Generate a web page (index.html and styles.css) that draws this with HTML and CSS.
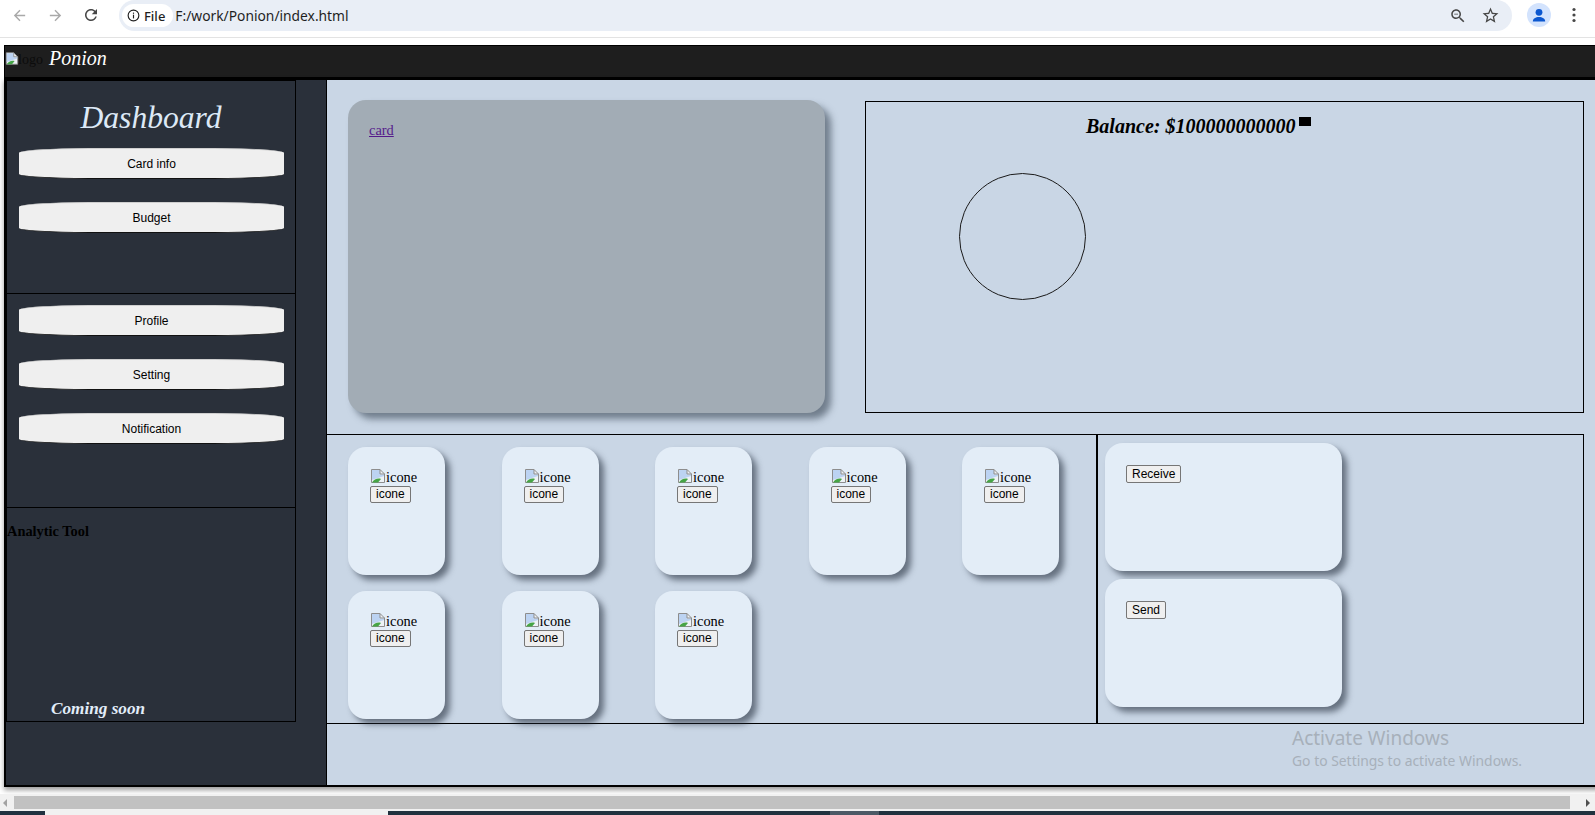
FILE: index.html
```html
<!DOCTYPE html>
<html>
<head>
<meta charset="utf-8">
<title>Ponion</title>
<link rel="stylesheet" href="styles.css">
</head>
<body>
<div class="chrome">
  <div class="nav-icon dim"><svg viewBox="0 0 24 24" width="17" height="17"><path d="M20 11H7.83l5.59-5.59L12 4l-8 8 8 8 1.41-1.41L7.83 13H20v-2z"/></svg></div>
  <div class="nav-icon dim"><svg viewBox="0 0 24 24" width="17" height="17"><path d="M12 4l-1.41 1.41L16.17 11H4v2h12.17l-5.58 5.59L12 20l8-8z"/></svg></div>
  <div class="nav-icon"><svg viewBox="0 0 24 24" width="18" height="18"><path d="M17.65 6.35C16.2 4.9 14.21 4 12 4c-4.42 0-7.99 3.58-7.99 8s3.57 8 7.99 8c3.730 0 6.84-2.55 7.73-6h-2.08c-.82 2.33-3.04 4-5.650 4-3.31 0-6-2.690-6-6s2.69-6 6-6c1.66 0 3.14.69 4.22 1.78L13 11h7V4l-2.35 2.35z"/></svg></div>
  <div class="omnibox">
    <div class="chip">
      <svg viewBox="0 0 16 16" width="13" height="13"><circle cx="8" cy="8" r="6.6" fill="none" stroke="#1f1f1f" stroke-width="1.4"/><rect x="7.3" y="7" width="1.4" height="4.6" fill="#1f1f1f"/><rect x="7.3" y="4.4" width="1.4" height="1.5" fill="#1f1f1f"/></svg>
      <span class="chip-text">File</span>
    </div>
    <span class="url">F:/work/Ponion/index.html</span>
    <div class="omni-icons">
      <div class="omni-icon"><svg viewBox="0 0 24 24" width="18" height="18"><path d="M15.5 14h-.79l-.28-.27C15.41 12.59 16 11.11 16 9.5 16 5.91 13.09 3 9.5 3S3 5.91 3 9.5 5.91 16 9.5 16c1.61 0 3.09-.59 4.23-1.57l.27.28v.79l5 4.99L20.49 19l-4.99-5zm-6 0C7.01 14 5 11.99 5 9.5S7.01 5 9.5 5 14 7.01 14 9.5 11.99 14 9.5 14zM7 9h5v1H7z"/></svg></div>
      <div class="omni-icon"><svg viewBox="0 0 24 24" width="19" height="19"><path d="M22 9.24l-7.19-.62L12 2 9.19 8.63 2 9.24l5.46 4.73L5.82 21 12 17.27 18.18 21l-1.63-7.03L22 9.24zM12 15.4l-3.76 2.27 1-4.28-3.32-2.88 4.38-.38L12 6.1l1.71 4.04 4.38.38-3.32 2.88 1 4.28L12 15.4z"/></svg></div>
    </div>
  </div>
  <div class="avatar-slot">
    <div class="avatar"><svg viewBox="0 0 24 24" width="24" height="24"><circle cx="12" cy="9.3" r="3.4" fill="#0b57d0"/><path d="M5.8 18.6c0-3 2.8-4.6 6.2-4.6s6.2 1.6 6.2 4.6z" fill="#0b57d0"/></svg></div>
  </div>
  <div class="kebab"><svg viewBox="0 0 4 16" width="4" height="16"><circle cx="2" cy="2.5" r="1.6"/><circle cx="2" cy="8" r="1.6"/><circle cx="2" cy="13.5" r="1.6"/></svg></div>
</div>

<div class="viewport">
  <div class="page">
    <header class="topbar">
      <span class="logo">
        <svg class="broken" viewBox="0 0 16 16" width="14" height="15"><path d="M1.5 1.5h8.5l4.5 4.5v8.5h-13z" fill="#eef2f6" stroke="#8d8d8d"/><path d="M2 2h8v4.5h4V8L2 12z" fill="#bcd3f2"/><path d="M2 14.5c2-3.2 5.5-4.6 9-3.6l-3 3.6z" fill="#46a546"/><path d="M10 1.5v4.5h4.5" fill="none" stroke="#8d8d8d"/></svg><span class="logo-alt">logo</span>
      </span>
      <span class="brand">Ponion</span>
    </header>

    <div class="main">
      <aside class="sidebar">
        <section class="panel panel-top">
          <h1 class="dash-title">Dashboard</h1>
          <button class="side-btn">Card info</button>
          <button class="side-btn">Budget</button>
        </section>
        <section class="panel panel-mid">
          <button class="side-btn">Profile</button>
          <button class="side-btn">Setting</button>
          <button class="side-btn">Notification</button>
        </section>
        <section class="panel panel-tool">
          <h4 class="tool-title">Analytic Tool</h4>
          <h3 class="soon">Coming soon</h3>
        </section>
      </aside>

      <div class="content">
        <div class="top-row">
          <div class="bank-card"><a class="card-link" href="#">card</a></div>
          <div class="balance-box">
            <div class="balance-head">
              <h2 class="balance">Balance: $100000000000</h2>
              <span class="sq"></span>
            </div>
            <div class="ring"></div>
          </div>
        </div>

        <div class="bottom-row">
          <div class="icons-box">
            <div class="icon-card"><div class="alt-line"><svg class="broken" viewBox="0 0 16 16" width="16" height="16"><path d="M1.5 1.5h8.5l4.5 4.5v8.5h-13z" fill="#eef2f6" stroke="#8d8d8d"/><path d="M2 2h8v4.5h4V8L2 12z" fill="#bcd3f2"/><path d="M2 14.5c2-3.2 5.5-4.6 9-3.6l-3 3.6z" fill="#46a546"/><path d="M10 1.5v4.5h4.5" fill="none" stroke="#8d8d8d"/></svg><span>icone</span></div><button class="ui-btn">icone</button></div>
            <div class="icon-card"><div class="alt-line"><svg class="broken" viewBox="0 0 16 16" width="16" height="16"><path d="M1.5 1.5h8.5l4.5 4.5v8.5h-13z" fill="#eef2f6" stroke="#8d8d8d"/><path d="M2 2h8v4.5h4V8L2 12z" fill="#bcd3f2"/><path d="M2 14.5c2-3.2 5.5-4.6 9-3.6l-3 3.6z" fill="#46a546"/><path d="M10 1.5v4.5h4.5" fill="none" stroke="#8d8d8d"/></svg><span>icone</span></div><button class="ui-btn">icone</button></div>
            <div class="icon-card"><div class="alt-line"><svg class="broken" viewBox="0 0 16 16" width="16" height="16"><path d="M1.5 1.5h8.5l4.5 4.5v8.5h-13z" fill="#eef2f6" stroke="#8d8d8d"/><path d="M2 2h8v4.5h4V8L2 12z" fill="#bcd3f2"/><path d="M2 14.5c2-3.2 5.5-4.6 9-3.6l-3 3.6z" fill="#46a546"/><path d="M10 1.5v4.5h4.5" fill="none" stroke="#8d8d8d"/></svg><span>icone</span></div><button class="ui-btn">icone</button></div>
            <div class="icon-card"><div class="alt-line"><svg class="broken" viewBox="0 0 16 16" width="16" height="16"><path d="M1.5 1.5h8.5l4.5 4.5v8.5h-13z" fill="#eef2f6" stroke="#8d8d8d"/><path d="M2 2h8v4.5h4V8L2 12z" fill="#bcd3f2"/><path d="M2 14.5c2-3.2 5.5-4.6 9-3.6l-3 3.6z" fill="#46a546"/><path d="M10 1.5v4.5h4.5" fill="none" stroke="#8d8d8d"/></svg><span>icone</span></div><button class="ui-btn">icone</button></div>
            <div class="icon-card"><div class="alt-line"><svg class="broken" viewBox="0 0 16 16" width="16" height="16"><path d="M1.5 1.5h8.5l4.5 4.5v8.5h-13z" fill="#eef2f6" stroke="#8d8d8d"/><path d="M2 2h8v4.5h4V8L2 12z" fill="#bcd3f2"/><path d="M2 14.5c2-3.2 5.5-4.6 9-3.6l-3 3.6z" fill="#46a546"/><path d="M10 1.5v4.5h4.5" fill="none" stroke="#8d8d8d"/></svg><span>icone</span></div><button class="ui-btn">icone</button></div>
            <div class="icon-card"><div class="alt-line"><svg class="broken" viewBox="0 0 16 16" width="16" height="16"><path d="M1.5 1.5h8.5l4.5 4.5v8.5h-13z" fill="#eef2f6" stroke="#8d8d8d"/><path d="M2 2h8v4.5h4V8L2 12z" fill="#bcd3f2"/><path d="M2 14.5c2-3.2 5.5-4.6 9-3.6l-3 3.6z" fill="#46a546"/><path d="M10 1.5v4.5h4.5" fill="none" stroke="#8d8d8d"/></svg><span>icone</span></div><button class="ui-btn">icone</button></div>
            <div class="icon-card"><div class="alt-line"><svg class="broken" viewBox="0 0 16 16" width="16" height="16"><path d="M1.5 1.5h8.5l4.5 4.5v8.5h-13z" fill="#eef2f6" stroke="#8d8d8d"/><path d="M2 2h8v4.5h4V8L2 12z" fill="#bcd3f2"/><path d="M2 14.5c2-3.2 5.5-4.6 9-3.6l-3 3.6z" fill="#46a546"/><path d="M10 1.5v4.5h4.5" fill="none" stroke="#8d8d8d"/></svg><span>icone</span></div><button class="ui-btn">icone</button></div>
            <div class="icon-card"><div class="alt-line"><svg class="broken" viewBox="0 0 16 16" width="16" height="16"><path d="M1.5 1.5h8.5l4.5 4.5v8.5h-13z" fill="#eef2f6" stroke="#8d8d8d"/><path d="M2 2h8v4.5h4V8L2 12z" fill="#bcd3f2"/><path d="M2 14.5c2-3.2 5.5-4.6 9-3.6l-3 3.6z" fill="#46a546"/><path d="M10 1.5v4.5h4.5" fill="none" stroke="#8d8d8d"/></svg><span>icone</span></div><button class="ui-btn">icone</button></div>
          </div>
          <div class="transfer-box">
            <div class="t-card"><button class="ui-btn">Receive</button></div>
            <div class="t-card"><button class="ui-btn">Send</button></div>
          </div>
        </div>
      </div>
    </div>
  </div>
  <div class="hscroll">
    <span class="arrow-left"></span>
    <div class="thumb"></div>
    <span class="arrow-right"></span>
  </div>
</div>
<div class="taskbar">
  <div class="tb-a"></div>
  <div class="tb-light"></div>
  <div class="tb-b"></div>
  <div class="tb-patch"></div>
  <div class="tb-c"></div>
</div>

<div class="watermark">
  <div class="wm-1">Activate Windows</div>
  <div class="wm-2">Go to Settings to activate Windows.</div>
</div>
</body>
</html>
```

FILE: styles.css
```css
* { box-sizing: border-box; }
html, body { margin: 0; padding: 0; }
body {
  width: 1595px;
  height: 815px;
  overflow: hidden;
  background: #ffffff;
  font-family: "Liberation Serif", "Times New Roman", serif;
  position: relative;
}

/* ---------- browser chrome ---------- */
.chrome {
  height: 38px;
  border-bottom: 1px solid #e3e3e3;
  display: flex;
  align-items: flex-start;
  padding-left: 1px;
  background: #ffffff;
}
.nav-icon {
  width: 36px;
  height: 30px;
  display: flex;
  align-items: center;
  justify-content: center;
  fill: #474747;
}
.nav-icon.dim { fill: #a9a9a9; }
.omnibox {
  margin-left: 10px;
  width: 1393px;
  height: 31px;
  border-radius: 16px;
  background: #e9eef6;
  display: flex;
  align-items: center;
  padding: 0 6px 0 3px;
}
.chip {
  height: 23px;
  border-radius: 12px;
  background: #ffffff;
  display: flex;
  align-items: center;
  gap: 4px;
  padding: 0 8px 0 5px;
}
.chip-text {
  font-family: "Noto Sans", "Open Sans", sans-serif;
  font-size: 13px;
  font-weight: 500;
  color: #1f1f1f;
}
.url {
  margin-left: 2px;
  font-family: "Noto Sans", "Open Sans", sans-serif;
  font-size: 13.8px;
  color: #1f1f1f;
}
.omni-icons { margin-left: auto; display: flex; }
.omni-icon {
  width: 32px;
  height: 30px;
  display: flex;
  align-items: center;
  justify-content: center;
  fill: #474747;
}
.avatar-slot {
  margin-left: 10px;
  width: 34px;
  height: 30px;
  display: flex;
  align-items: center;
  justify-content: center;
}
.avatar {
  width: 24px;
  height: 24px;
  border-radius: 50%;
  background: #d3e3fd;
  display: flex;
}
.kebab {
  width: 36px;
  height: 30px;
  display: flex;
  align-items: center;
  justify-content: center;
  fill: #474747;
}

/* ---------- viewport ---------- */
.viewport {
  height: 773px;
  display: flex;
  flex-direction: column;
}
.page {
  height: 756px;
  overflow: hidden;
  padding: 7px 0 0 4px;
}

/* header */
.topbar {
  width: 1640px;
  height: 33px;
  border: 1px solid #000;
  background: #1e1e1e;
  line-height: 23px;
  padding-top: 1px;
  white-space: nowrap;
}
.logo {
  display: inline-block;
  width: 40px;
  vertical-align: top;
}
.logo .broken { vertical-align: -2px; }
.logo-alt {
  font-size: 14px;
  color: #0c0c0c;
  margin-left: -1px;
}
.brand {
  font-style: italic;
  font-size: 20px;
  color: #ffffff;
}

/* main */
.main {
  width: 1640px;
  height: 709px;
  border: 2px solid #000;
  display: flex;
  box-shadow: 0 3px 5px rgba(0, 0, 0, 0.4);
}
.sidebar {
  width: 321px;
  flex: none;
  background: #2a303a;
  border-right: 1px solid #000;
  display: flex;
  flex-direction: column;
}
.panel {
  width: 290px;
  height: 214px;
  border: 1px solid #000;
  display: flex;
  flex-direction: column;
}
.panel + .panel { margin-top: -1px; height: 215px; }
.dash-title {
  margin: 19px 0 0;
  font-size: 31.6px;
  font-weight: normal;
  font-style: italic;
  line-height: 36px;
  text-align: center;
  color: #dde9f6;
}
.side-btn {
  display: block;
  width: 265px;
  height: 31px;
  margin: 23px 0 0 12px;
  padding: 0;
  border: 0;
  border-top: 1px solid #cfcfcf;
  border-bottom: 1px solid #111;
  border-radius: 70px / 5px;
  background: #efefef;
  font-family: "Liberation Sans", Arial, sans-serif;
  font-size: 12px;
  color: #000;
}
.dash-title + .side-btn { margin-top: 12px; }
.panel-mid .side-btn:first-child { margin-top: 11px; }
.tool-title {
  margin: 15px 0 0;
  font-size: 14.4px;
  line-height: 17px;
  font-weight: bold;
  color: #000;
}
.soon {
  margin: auto 0 2px;
  padding-left: 44px;
  font-size: 17.2px;
  line-height: 20px;
  font-weight: bold;
  font-style: italic;
  color: #e2edf9;
}

/* content */
.content {
  flex: 1;
  background: #c9d6e5;
}
.top-row {
  height: 354px;
  display: flex;
  align-items: flex-start;
  padding: 20px 0 0 21px;
}
.bank-card {
  flex: none;
  width: 477px;
  height: 313px;
  border-radius: 18px;
  background: #a2acb5;
  box-shadow: 6px 6px 7px rgba(40, 52, 68, 0.55);
  padding: 22px 0 0 21px;
  font-size: 14.4px;
  line-height: 16px;
}
.card-link { color: #551a8b; }
.balance-box {
  flex: none;
  margin: 1px 0 0 40px;
  width: 719px;
  height: 312px;
  border: 1px solid #000;
  padding: 13px 0 0 220px;
}
.balance-head {
  display: flex;
  align-items: flex-start;
}
.balance {
  margin: 0;
  font-size: 20px;
  line-height: 23px;
  font-weight: bold;
  font-style: italic;
  color: #000;
}
.sq {
  width: 12px;
  height: 9px;
  margin: 2px 0 0 4px;
  background: #000;
}
.ring {
  width: 127px;
  height: 127px;
  margin: 35px 0 0 -127px;
  border: 1px solid #1a1a1a;
  border-radius: 50%;
}

.bottom-row {
  display: flex;
  height: 290px;
}
.icons-box {
  width: 770px;
  border: 1px solid #000;
  border-left: 0;
  padding: 12px 0 0 21px;
  display: grid;
  grid-template-columns: repeat(5, 97px);
  grid-auto-rows: 128px;
  column-gap: 56.5px;
  row-gap: 16px;
  align-content: start;
}
.icon-card {
  border-radius: 18px;
  background: #e3edf7;
  box-shadow: 5px 5px 6px rgba(35, 45, 60, 0.6);
  padding: 21px 0 0 22px;
}
.alt-line {
  height: 16px;
  display: flex;
  align-items: flex-end;
  font-size: 14.4px;
  line-height: 14px;
  color: #000;
}
.icon-card .ui-btn { margin-top: 2px; }
.ui-btn {
  display: block;
  height: 17px;
  padding: 0 5px;
  border: 1px solid #767676;
  border-radius: 2px;
  background: #efefef;
  font-family: "Liberation Sans", Arial, sans-serif;
  font-size: 12px;
  line-height: 15px;
  color: #000;
}
.transfer-box {
  width: 487px;
  border: 1px solid #000;
  padding: 8px 0 0 7px;
  display: flex;
  flex-direction: column;
  gap: 8px;
}
.t-card {
  width: 237px;
  height: 128px;
  border-radius: 18px;
  background: #e3edf7;
  box-shadow: 5px 5px 6px rgba(35, 45, 60, 0.6);
  padding: 22px 0 0 21px;
}
.t-card .ui-btn { height: 18px; }

/* horizontal scrollbar */
.hscroll {
  height: 17px;
  background: #f1f1f1;
  display: flex;
  align-items: center;
}
.arrow-left {
  width: 0; height: 0;
  margin-left: 3px;
  border-top: 4px solid transparent;
  border-bottom: 4px solid transparent;
  border-right: 4px solid #a3a3a3;
}
.thumb {
  margin-left: 7px;
  width: 1556px;
  height: 13px;
  background: #c1c1c1;
}
.arrow-right {
  width: 0; height: 0;
  margin-left: 16px;
  border-top: 4px solid transparent;
  border-bottom: 4px solid transparent;
  border-left: 4px solid #505050;
}

/* taskbar strip */
.taskbar {
  height: 4px;
  display: flex;
}
.tb-a { width: 45px; background: #203140; }
.tb-light { width: 343px; background: #f1f1f1; }
.tb-b { width: 442px; background: #21323f; }
.tb-patch { width: 49px; background: #4c5a66; }
.tb-c { flex: 1; background: #21323f; }

/* OS watermark overlay */
.watermark {
  position: absolute;
  left: 1292px;
  top: 725px;
  font-family: "Noto Sans", "Open Sans", sans-serif;
  color: #a7b0ba;
}
.wm-1 { font-size: 19px; line-height: 26px; }
.wm-2 { font-size: 13.9px; line-height: 20px; }
```
